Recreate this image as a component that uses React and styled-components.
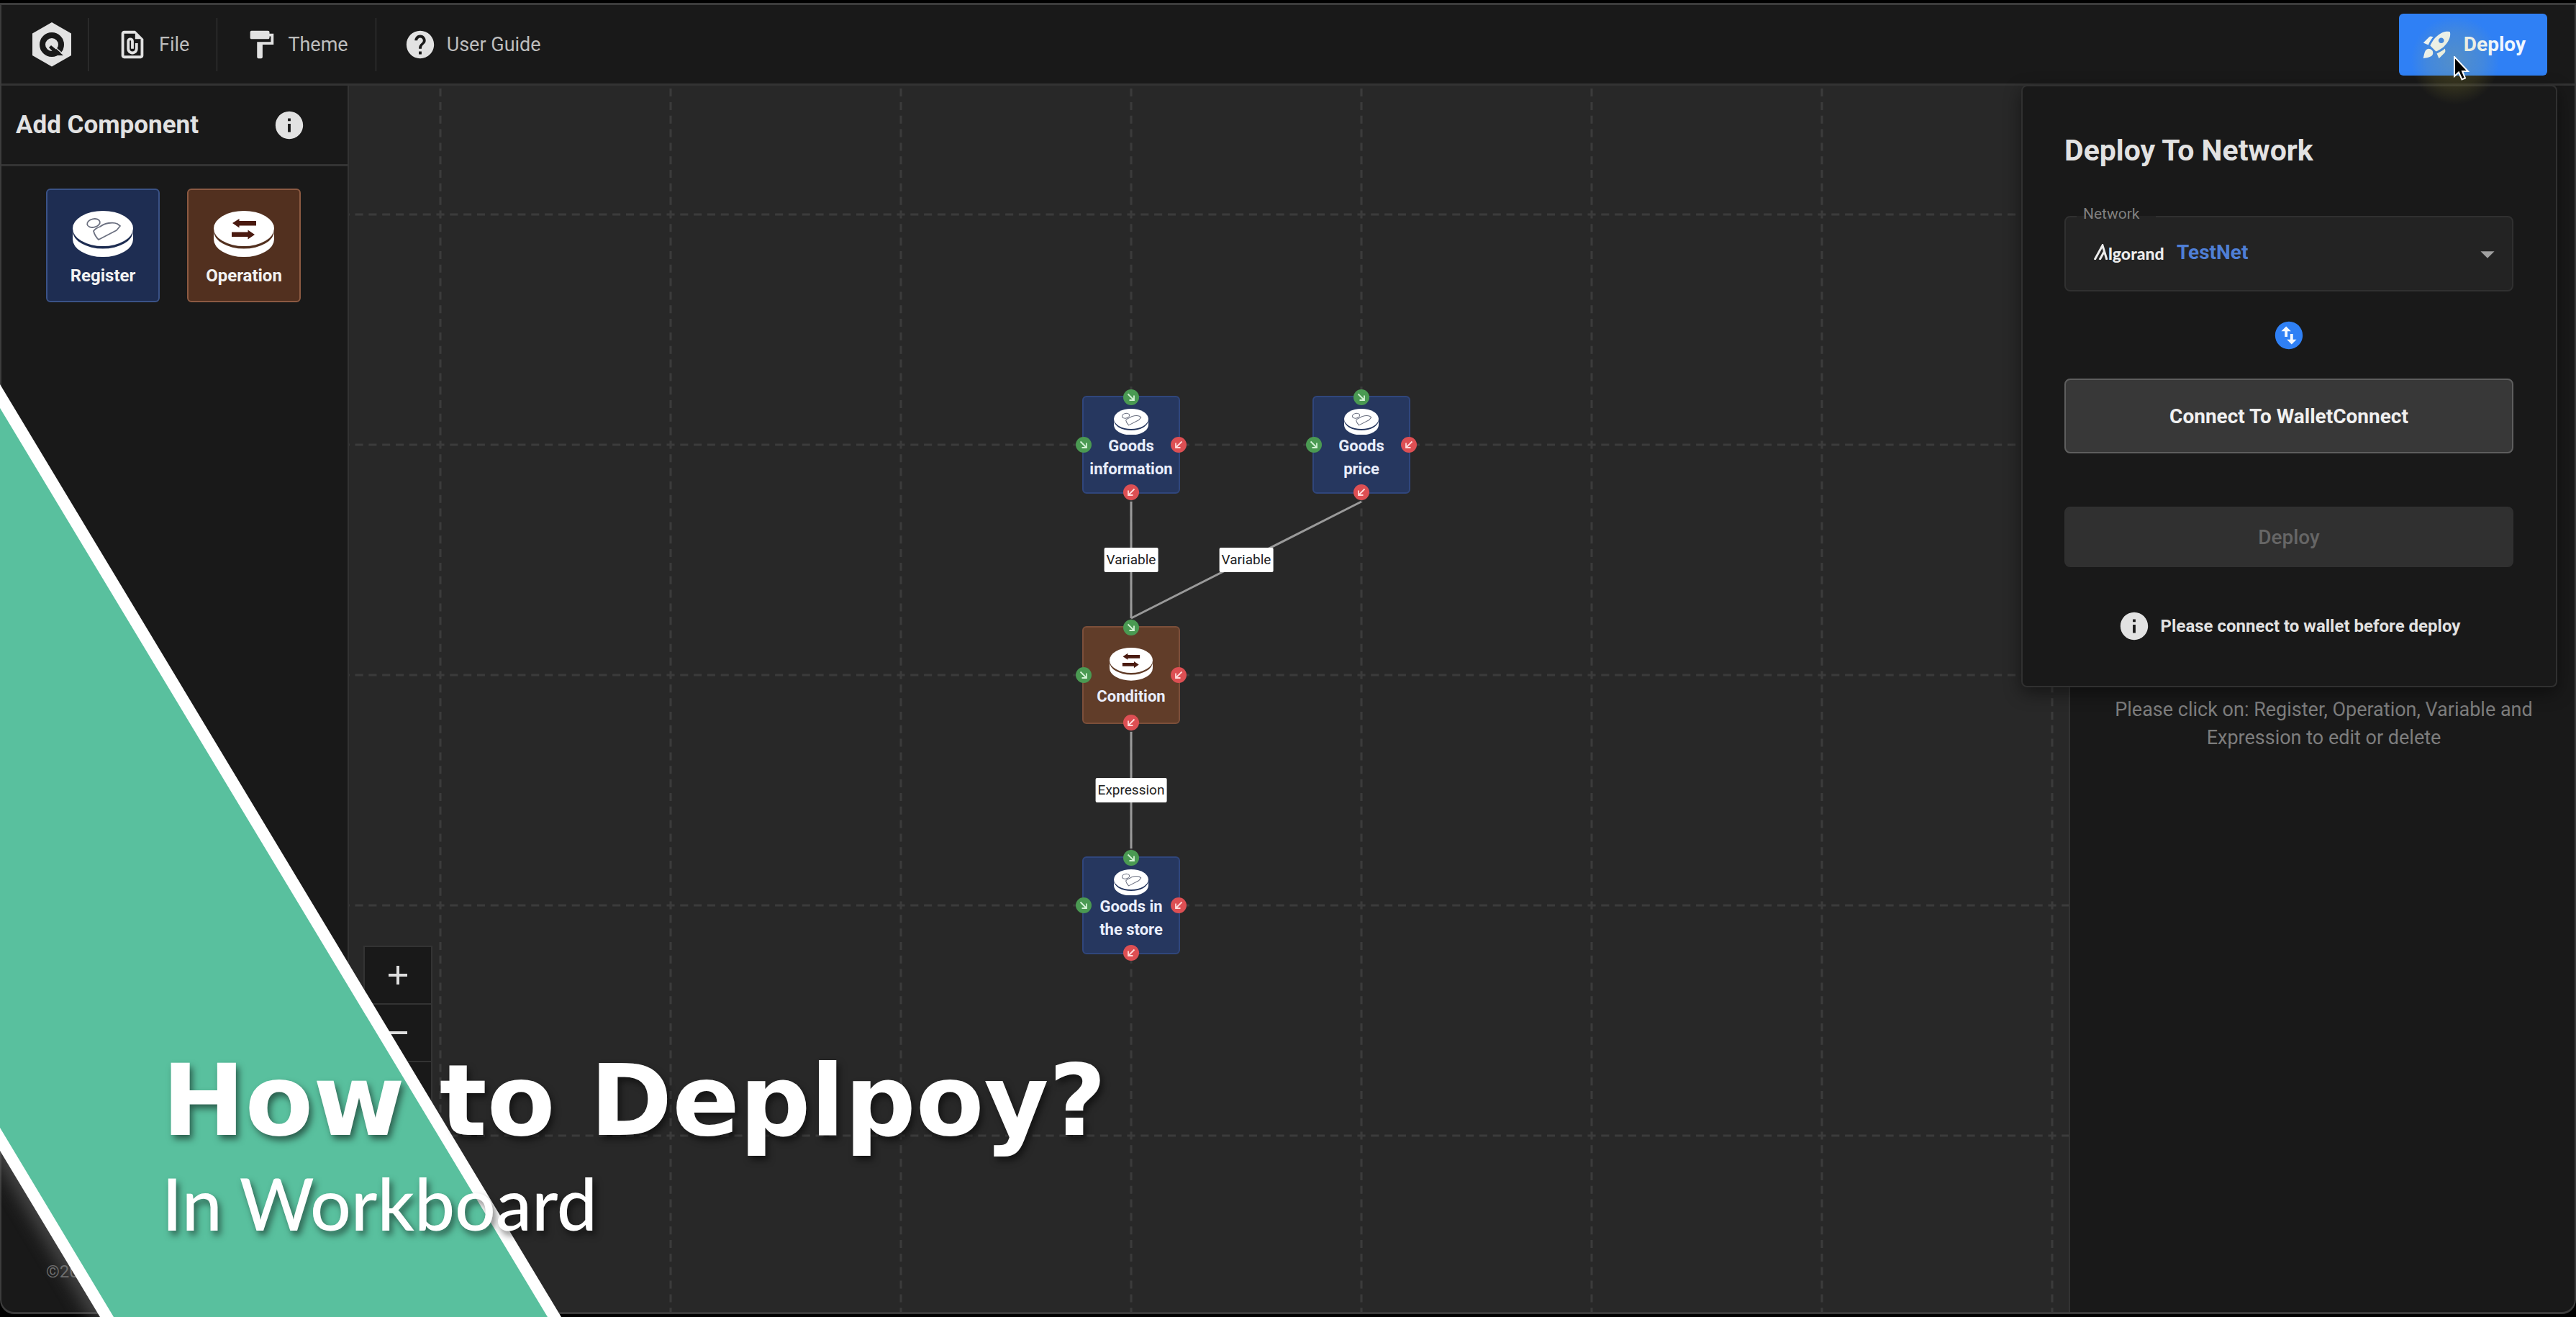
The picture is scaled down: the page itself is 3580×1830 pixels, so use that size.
import React from "react";
import styled, { createGlobalStyle } from "styled-components";
import {
  MdOutlineFilePresent,
  MdFormatPaint,
  MdHelp,
  MdInfo,
  MdRocketLaunch,
  MdSwapVerticalCircle,
  MdArrowDropDown,
} from "react-icons/md";

const color = {
  panel: "#191919",
  canvas: "#282828",
  line: "#333333",
  frame: "#3c3c3c",
  text: "#e2e2e2",
  muted: "#7d7d7d",
  blue: "#2f80f5",
  green: "#59c09e",
};

const GlobalStyle = createGlobalStyle`
  *, *::before, *::after { box-sizing: border-box; }
  body {
    margin: 0;
    background: #000;
    color: ${color.text};
    font-family: Roboto, "Liberation Sans", sans-serif;
    font-size: 28px;
  }
  button, select { font: inherit; color: inherit; }
`;

const Page = styled.div`
  position: relative;
  display: flex;
  min-height: 100vh;
  padding: 4px 0;
  overflow: hidden;
`;

const Window = styled.div`
  flex: 1;
  display: flex;
  flex-direction: column;
  border: solid ${color.frame};
  border-width: 3px 2px;
  border-radius: 0 0 20px 20px;
  background: ${color.panel};
  overflow: hidden;
`;

const Toolbar = styled.header`
  position: relative;
  z-index: 2;
  display: flex;
  align-items: center;
  height: 112px;
  padding: 0 38px 0 42px;
  border-bottom: 3px solid ${color.line};
`;

const Brand = styled.a`
  display: flex;
  margin-right: 22px;
`;

const Menu = styled.nav`
  display: flex;
  flex: 1;
`;

const MenuButton = styled.button`
  display: flex;
  align-items: center;
  gap: 14px;
  height: 74px;
  padding: 0 38px;
  border: 0;
  border-left: 1px solid #3a3a3a;
  background: none;
  color: #bdbdbd;
  font-size: 27px;

  svg { color: ${color.text}; }
`;

const DeployToggle = styled.button`
  display: flex;
  align-items: center;
  gap: 14px;
  height: 86px;
  padding: 0 30px;
  border: 0;
  border-radius: 6px;
  background: ${color.blue};
  color: #f0f7ff;
  font-weight: 700;
`;

const CursorHalo = styled.div`
  position: absolute;
  right: 104px;
  top: 15px;
  width: 124px;
  height: 124px;
  border-radius: 50%;
  background: radial-gradient(rgba(200, 190, 60, 0.24), rgba(200, 190, 60, 0.12) 45%, rgba(200, 190, 60, 0) 70%);
  pointer-events: none;
  z-index: 4;

  svg {
    position: absolute;
    left: 60px;
    top: 56px;
  }
`;

const Workspace = styled.div`
  flex: 1;
  display: flex;
`;

const Sidebar = styled.aside`
  display: flex;
  flex-direction: column;
  width: 483px;
  border-right: 2px solid ${color.line};
`;

const SidebarHeader = styled.div`
  display: flex;
  align-items: center;
  justify-content: space-between;
  height: 112px;
  padding: 0 58px 0 20px;
  border-bottom: 3px solid ${color.line};
`;

const SidebarTitle = styled.h2`
  margin: 0;
  font-size: 35px;
  font-weight: 700;
`;

const Palette = styled.div`
  display: flex;
  gap: 38px;
  padding: 31px 62px;
`;

const PaletteCard = styled.button`
  display: flex;
  flex-direction: column;
  align-items: center;
  justify-content: center;
  gap: 12px;
  width: 158px;
  height: 158px;
  padding: 8px 0 0;
  border: 2px solid ${(p) => (p.$kind === "register" ? "#3a5286" : "#8c5a42")};
  border-radius: 6px;
  background: ${(p) => (p.$kind === "register" ? "#1e2d52" : "#52301f")};
  color: #f2f2f2;
  font-size: 24px;
  line-height: 28px;
  font-weight: 700;
`;

const Copyright = styled.small`
  margin-top: auto;
  padding: 0 62px 40px;
  color: #6c6c6c;
  font-size: 24px;
  line-height: 32px;
`;

const Canvas = styled.main`
  position: relative;
  flex: 1;
  background: ${color.canvas};
  overflow: hidden;
`;

const CanvasDrawing = styled.svg`
  position: absolute;
  inset: 0;
  width: 100%;
  height: 100%;
`;

const Node = styled.div`
  position: absolute;
  left: ${(p) => p.$x - 68}px;
  top: ${(p) => p.$y - 68}px;
  display: flex;
  flex-direction: column;
  align-items: center;
  justify-content: center;
  gap: ${(p) => (p.$kind === "register" ? 0 : 6)}px;
  width: 136px;
  height: 136px;
  padding-top: ${(p) => (p.$kind === "register" ? 0 : 8)}px;
  border: 2px solid ${(p) => (p.$kind === "register" ? "#30467c" : "#7c4f3a")};
  border-radius: 6px;
  background: ${(p) => (p.$kind === "register" ? "#26375f" : "#613d29")};
  color: #e9eefc;
  font-size: 22px;
  line-height: 32px;
  font-weight: 700;
  text-align: center;
`;

const Port = styled.svg`
  position: absolute;
  left: calc(${(p) => p.$x} - 11px);
  top: calc(${(p) => p.$y} - 11px);
  width: 22px;
  height: 22px;
`;

const EdgeLabel = styled.span`
  position: absolute;
  left: ${(p) => p.$x}px;
  top: ${(p) => p.$y}px;
  padding: 0 3px;
  border-radius: 2px;
  background: #fff;
  color: #222;
  font-size: 19px;
  line-height: 34px;
  transform: translate(-50%, -50%);
`;

const ZoomControls = styled.div`
  position: absolute;
  left: 20px;
  bottom: 265px;
  display: flex;
  flex-direction: column;
  width: 96px;
  border: 2px solid ${color.line};
  background: ${color.panel};
`;

const ZoomButton = styled.button`
  display: flex;
  align-items: center;
  justify-content: center;
  height: 80px;
  border: 0;
  border-bottom: 2px solid ${color.line};
  background: none;
`;

const Inspector = styled.aside`
  width: 703px;
  padding: 848px 48px 0 52px;
  border-left: 2px solid ${color.line};
  color: ${color.muted};
  font-size: 27px;
  line-height: 39px;
  text-align: center;
`;

const Hint = styled.p`
  margin: 0;
`;

const DeployPanel = styled.form`
  position: absolute;
  z-index: 3;
  top: 111px;
  right: 24px;
  display: flex;
  flex-direction: column;
  width: 745px;
  padding: 64px 59px 60px 58px;
  border: 2px solid #303030;
  border-radius: 8px;
  background: ${color.panel};
  box-shadow: 0 8px 24px rgba(0, 0, 0, 0.45);
`;

const PanelTitle = styled.h1`
  margin: 0 0 66px;
  font-size: 41px;
  line-height: 50px;
  font-weight: 700;
`;

const Field = styled.div`
  position: relative;
  display: grid;
  align-items: center;
  margin-bottom: 38px;
`;

const FieldLabel = styled.label`
  position: absolute;
  top: -17px;
  left: 17px;
  padding: 0 22px 0 9px;
  background: linear-gradient(${color.panel} 60%, #232323 60%);
  color: #808080;
  font-size: 21px;
  line-height: 28px;
`;

const NetworkSelect = styled.select`
  appearance: none;
  height: 105px;
  padding: 0 60px 4px 154px;
  border: 2px solid #303030;
  border-radius: 8px;
  background: #232323;
  color: #4f7fd6;
  font-weight: 700;
`;

const NetworkLogo = styled.span`
  position: absolute;
  left: 41px;
  display: flex;
  align-items: baseline;
  padding-bottom: 2px;
  color: #ececec;
  font-family: Lato, sans-serif;
  font-size: 23px;
  line-height: 28px;
  font-weight: 900;
  pointer-events: none;
`;

const SelectArrow = styled(MdArrowDropDown)`
  position: absolute;
  right: 13px;
  color: #a0a0a0;
  pointer-events: none;
`;

const SwapBadge = styled.span`
  align-self: center;
  display: flex;
  margin-bottom: 37px;
  color: ${color.blue};
  background: radial-gradient(circle, #f4f9ff 15px, transparent 16px);
`;

const PanelButton = styled.button`
  height: ${(p) => (p.$primary ? 104 : 84)}px;
  margin-bottom: ${(p) => (p.$primary ? 74 : 59)}px;
  border: 2px solid ${(p) => (p.$primary ? "#5e5e5e" : "#303030")};
  border-radius: 8px;
  background: ${(p) => (p.$primary ? "#383838" : "#303030")};
  color: ${(p) => (p.$primary ? "#f0f0f0" : "#666666")};
  font-weight: ${(p) => (p.$primary ? 700 : 500)};
`;

const Notice = styled.p`
  display: flex;
  align-items: center;
  justify-content: center;
  gap: 14px;
  margin: 0;
  font-size: 24px;
  font-weight: 700;
  white-space: nowrap;
`;

const Banner = styled.section`
  position: absolute;
  left: 0;
  bottom: 0;
  z-index: 5;
  padding: 0 0 104px 225px;
  color: #fff;
  font-family: Lato, sans-serif;
  text-shadow: 4px 6px 10px rgba(0, 0, 0, 0.5);
  pointer-events: none;
`;

const BannerShape = styled.svg`
  position: absolute;
  left: 0;
  bottom: 0;
`;

const BannerTitle = styled.div`
  position: relative;
  margin-bottom: 11px;
  font-family: "DejaVu Sans", sans-serif;
  font-size: 138px;
  line-height: 150px;
  font-weight: 700;
`;

const BannerSubtitle = styled.div`
  position: relative;
  font-size: 100px;
  line-height: 110px;
  font-weight: 500;
`;

function Logo() {
  return (
    <svg width="56" height="64" viewBox="0 0 56 64" aria-hidden="true">
      <path d="M28 1 L55 16.500 V47 L28 62.500 L1 47 V16.500 Z" fill="#e2e2e2" />
      <circle cx="28" cy="32" r="13" fill="none" stroke="#191919" strokeWidth="8" />
      <path d="M27 33 L44 47 H34 L24 36 Z" fill="#191919" />
      <path d="M28 31.500 L41 43" stroke="#e2e2e2" strokeWidth="1.500" />
    </svg>
  );
}

function Coin({ kind, width }) {
  return (
    <svg width={width} viewBox="0 0 84 64" aria-hidden="true">
      <ellipse cx="42" cy="24.500" rx="42" ry="24.500" fill="#fff" />
      <path d="M0 28 A42 24.500 0 0 0 84 28 V39.500 A42 24.500 0 0 1 0 39.500 Z" fill="#fff" />
      {kind === "register" ? (
        <g fill="none" stroke="#6b7080" strokeWidth="1.800">
          <ellipse cx="29" cy="17" rx="9" ry="5.800" transform="rotate(-12 29 17)" />
          <path d="M38 22 C44 17 56 15 62 18 L66 21 L61 27 L36 40 C33 37 30 32 29 28 Q32 24 38 22 Z" strokeLinejoin="round" />
        </g>
      ) : (
        <g fill="#4a1a10">
          <path d="M26 17 L35.500 11 V14 H59 V20.500 H35.500 V23.500 Z" />
          <path d="M57 33 L47.500 26.500 V29.500 H25 V36 H47.500 V39.500 Z" />
        </g>
      )}
    </svg>
  );
}

function InPort(props) {
  return (
    <Port viewBox="0 0 22 22" {...props}>
      <circle cx="11" cy="11" r="11" fill="#4a9a52" />
      <path d="M6.500 6.500 L15 15 M15 8.500 V15 H8.500" fill="none" stroke="#d4f2d6" strokeWidth="1.800" />
    </Port>
  );
}

function OutPort(props) {
  return (
    <Port viewBox="0 0 22 22" {...props}>
      <circle cx="11" cy="11" r="11" fill="#dd4f53" />
      <path d="M15.500 6.500 L7 15 M7 8.500 V15 H13.500" fill="none" stroke="#ffdcdc" strokeWidth="1.800" />
    </Port>
  );
}

const nodes = [
  { id: "info", kind: "register", x: 1087, y: 499, lines: ["Goods", "information"] },
  { id: "price", kind: "register", x: 1407, y: 499, lines: ["Goods", "price"] },
  { id: "condition", kind: "operation", x: 1087, y: 819, lines: ["Condition"] },
  { id: "store", kind: "register", x: 1087, y: 1139, lines: ["Goods in", "the store"] },
];

const edges = [
  { from: "info", to: "condition", label: "Variable" },
  { from: "price", to: "condition", label: "Variable" },
  { from: "condition", to: "store", label: "Expression" },
];

const nodeById = Object.fromEntries(nodes.map((n) => [n.id, n]));

function FlowNode({ node }) {
  return (
    <Node $x={node.x} $y={node.y} $kind={node.kind}>
      <Coin kind={node.kind} width={node.kind === "register" ? 48 : 60} />
      <span>
        {node.lines.map((line, i) => (
          <React.Fragment key={line}>
            {i > 0 && <br />}
            {line}
          </React.Fragment>
        ))}
      </span>
      <InPort $x="50%" $y="0%" />
      <InPort $x="0%" $y="50%" />
      <OutPort $x="100%" $y="50%" />
      <OutPort $x="50%" $y="100%" />
    </Node>
  );
}

export default function App() {
  return (
    <Page>
      <GlobalStyle />
      <Window>
        <Toolbar>
          <Brand href="#" aria-label="Home">
            <Logo />
          </Brand>
          <Menu>
            <MenuButton type="button">
              <MdOutlineFilePresent size={46} />
              File
            </MenuButton>
            <MenuButton type="button">
              <MdFormatPaint size={46} />
              Theme
            </MenuButton>
            <MenuButton type="button">
              <MdHelp size={46} />
              User Guide
            </MenuButton>
          </Menu>
          <DeployToggle type="button">
            <MdRocketLaunch size={46} />
            Deploy
          </DeployToggle>
          <CursorHalo>
            <svg width="22" height="34" viewBox="0 0 22 34" aria-hidden="true">
              <path d="M1 1 V28 L7 22.500 L11.500 32.500 L16 30.500 L12 21 H20 Z" fill="#000" stroke="#fff" strokeWidth="2" />
            </svg>
          </CursorHalo>
          <DeployPanel>
            <PanelTitle>Deploy To Network</PanelTitle>
            <Field>
              <NetworkSelect id="network" defaultValue="testnet">
                <option value="testnet">TestNet</option>
              </NetworkSelect>
              <FieldLabel htmlFor="network">Network</FieldLabel>
              <NetworkLogo>
                <svg width="20" height="22" viewBox="0 0 20 22" aria-hidden="true">
                  <path d="M1 22 L12 2 L18 22 M8 22 L14 11" fill="none" stroke="#ececec" strokeWidth="3" />
                </svg>
                lgorand
              </NetworkLogo>
              <SelectArrow size={46} />
            </Field>
            <SwapBadge>
              <MdSwapVerticalCircle size={46} />
            </SwapBadge>
            <PanelButton type="button" $primary>
              Connect To WalletConnect
            </PanelButton>
            <PanelButton type="submit" disabled>
              Deploy
            </PanelButton>
            <Notice>
              <MdInfo size={46} />
              Please connect to wallet before deploy
            </Notice>
          </DeployPanel>
        </Toolbar>

        <Workspace>
          <Sidebar>
            <SidebarHeader>
              <SidebarTitle>Add Component</SidebarTitle>
              <MdInfo size={46} />
            </SidebarHeader>
            <Palette>
              <PaletteCard type="button" $kind="register">
                <Coin kind="register" width={84} />
                Register
              </PaletteCard>
              <PaletteCard type="button" $kind="operation">
                <Coin kind="operation" width={84} />
                Operation
              </PaletteCard>
            </Palette>
            <Copyright>©20</Copyright>
          </Sidebar>

          <Canvas>
            <CanvasDrawing>
              <defs>
                <pattern id="grid" width="320" height="320" x="287" y="19" patternUnits="userSpaceOnUse">
                  <path
                    d="M0 160 H320 M160 0 V320"
                    fill="none"
                    stroke="#3b3b3b"
                    strokeWidth="3"
                    strokeDasharray="11 7.8235"
                    strokeDashoffset="-3.910"
                  />
                </pattern>
              </defs>
              <rect width="100%" height="100%" fill="url(#grid)" />
              {edges.map(({ from, to }) => (
                <line
                  key={from}
                  x1={nodeById[from].x}
                  y1={nodeById[from].y + 79}
                  x2={nodeById[to].x}
                  y2={nodeById[to].y - 79}
                  stroke="#9a9a9a"
                  strokeWidth="3"
                />
              ))}
            </CanvasDrawing>
            {edges.map(({ from, to, label }) => (
              <EdgeLabel
                key={from}
                $x={(nodeById[from].x + nodeById[to].x) / 2}
                $y={(nodeById[from].y + nodeById[to].y) / 2}
              >
                {label}
              </EdgeLabel>
            ))}
            {nodes.map((node) => (
              <FlowNode key={node.id} node={node} />
            ))}
            <ZoomControls>
              <ZoomButton type="button" aria-label="Zoom in">
                <svg width="28" height="28" viewBox="0 0 28 28">
                  <path d="M1 14 H27 M14 1 V27" stroke="#dedede" strokeWidth="4" />
                </svg>
              </ZoomButton>
              <ZoomButton type="button" aria-label="Zoom out">
                <svg width="28" height="28" viewBox="0 0 28 28">
                  <path d="M1 14 H27" stroke="#dedede" strokeWidth="4" />
                </svg>
              </ZoomButton>
              <ZoomButton type="button" aria-label="Fit view" />
            </ZoomControls>
          </Canvas>

          <Inspector>
            <Hint>Please click on: Register, Operation, Variable and Expression to edit or delete</Hint>
          </Inspector>
        </Workspace>
      </Window>

      <Banner>
        <BannerShape width="784" height="1300" viewBox="0 0 784 1300" aria-hidden="true">
          <defs>
            <filter id="stripeGlow" x="-50%" y="-50%" width="200%" height="200%">
              <feGaussianBlur stdDeviation="12" />
            </filter>
          </defs>
          <path d="M0 1060 L150 1309" stroke="#777" strokeWidth="30" opacity="0.5" filter="url(#stripeGlow)" />
          <path d="M0 4 L780 1300 H139 L0 1069 Z" fill="#fff" />
          <path d="M0 37 L761 1300 H158 L0 1037 Z" fill={color.green} />
        </BannerShape>
        <BannerTitle>How to Deplpoy?</BannerTitle>
        <BannerSubtitle>In Workboard</BannerSubtitle>
      </Banner>
    </Page>
  );
}
